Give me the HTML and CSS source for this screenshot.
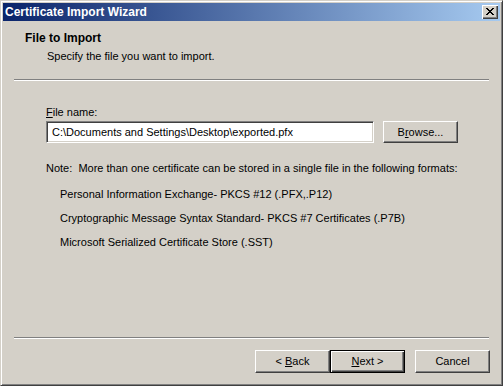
FILE: index.html
```html
<!DOCTYPE html>
<html lang="en">
<head>
    <meta charset="UTF-8">
    <title>Certificate Import Wizard</title>
    <link rel="stylesheet" href="styles.css">
</head>
<body>
    <div class="window">
        <div class="titlebar">
            <span class="title">Certificate Import Wizard</span>
            <button class="close-btn">
                <svg width="8" height="7" viewBox="0 0 8 7">
                    <path d="M0 0h2v1h1v1h2v-1h1v-1h2v1h-1v1h-1v1h-1v1h1v1h1v1h1v1h-2v-1h-1v-1h-2v1h-1v1h-2v-1h1v-1h1v-1h1v-1h-1v-1h-1v-1h-1z" fill="#000"/>
                </svg>
            </button>
        </div>
        <div class="page-header">
            <h1>File to Import</h1>
            <p>Specify the file you want to import.</p>
        </div>
        <div class="separator"></div>
        <div class="page-body">
            <label class="field-label"><u>F</u>ile name:</label>
            <div class="file-row">
                <div class="text-input">C:\Documents and Settings\Desktop\exported.pfx</div>
                <button class="btn"><span>B<u>r</u>owse...</span></button>
            </div>
            <p class="note">Note:&nbsp; More than one certificate can be stored in a single file in the following formats:</p>
            <ul class="formats">
                <li>Personal Information Exchange- PKCS #12 (.PFX,.P12)</li>
                <li>Cryptographic Message Syntax Standard- PKCS #7 Certificates (.P7B)</li>
                <li>Microsoft Serialized Certificate Store (.SST)</li>
            </ul>
        </div>
        <div class="separator"></div>
        <div class="button-row">
            <button class="btn"><span>&lt; <u>B</u>ack</span></button>
            <button class="btn default"><span><u>N</u>ext &gt;</span></button>
            <button class="btn cancel"><span>Cancel</span></button>
        </div>
    </div>
</body>
</html>
```

FILE: styles.css
```css
* {
    margin: 0;
    padding: 0;
    box-sizing: border-box;
}
body {
    font-family: 'Liberation Sans', Arial, sans-serif;
    font-size: 11px;
    line-height: 13px;
    color: #000;
    background: #d4d0c8;
}
.window {
    width: 503px;
    height: 386px;
    background: #d4d0c8;
    border: 1px solid;
    border-color: #d4d0c8 #404040 #404040 #d4d0c8;
    box-shadow: inset 1px 1px 0 #fff, inset -1px -1px 0 #808080;
    padding: 2px;
    display: flex;
    flex-direction: column;
}
.window > * {
    flex-shrink: 0;
}
.titlebar {
    height: 18px;
    background: linear-gradient(to right, #0a246a, #a6caf0);
    display: flex;
    align-items: center;
    justify-content: space-between;
    padding: 0 2px 0 2px;
}
.title {
    color: #fff;
    font-weight: bold;
    font-size: 12px;
}
.close-btn {
    width: 16px;
    height: 14px;
    background: #d4d0c8;
    border: none;
    box-shadow: inset 1px 1px 0 #fff, inset -1px -1px 0 #404040, inset -2px -2px 0 #808080;
    display: flex;
    align-items: center;
    justify-content: center;
    padding-bottom: 1px;
}
.page-header {
    padding: 11px 0 0 22px;
    height: 58px;
}
.page-header h1 {
    font-size: 12px;
    font-weight: bold;
}
.page-header p {
    margin-top: 5px;
    padding-left: 22px;
}
.separator {
    margin: 0 11px;
    height: 2px;
    border-top: 1px solid #808080;
    border-bottom: 1px solid #fff;
}
.page-body {
    padding: 25px 0 0 43px;
    height: 256px;
}
.field-label {
    display: block;
}
.file-row {
    display: flex;
    margin-top: 2px;
    gap: 9px;
}
.text-input {
    width: 328px;
    height: 22px;
    background: #fff;
    border: 1px solid;
    border-color: #808080 #fff #fff #808080;
    box-shadow: inset 1px 1px 0 #404040, inset -1px -1px 0 #d4d0c8;
    padding: 4px 0 0 5px;
    white-space: nowrap;
}
.btn {
    width: 75px;
    height: 22px;
    background: #d4d0c8;
    border: 1px solid;
    border-color: #fff #404040 #404040 #fff;
    box-shadow: inset -1px -1px 0 #808080;
    font: inherit;
    display: flex;
    align-items: center;
    justify-content: center;
    color: #000;
}
.note {
    margin-top: 19px;
}
.formats {
    list-style: none;
    padding-left: 14px;
    margin-top: 13px;
}
.formats li {
    margin-bottom: 11px;
}
.button-row {
    display: flex;
    justify-content: flex-end;
    padding: 11px 10px 0 0;
}
.button-row .btn {
    height: 23px;
}
.btn.default {
    border: 1px solid #000;
    box-shadow: inset 1px 1px 0 #fff, inset -1px -1px 0 #404040, inset -2px -2px 0 #808080;
}
.btn.cancel {
    margin-left: 10px;
}
```
